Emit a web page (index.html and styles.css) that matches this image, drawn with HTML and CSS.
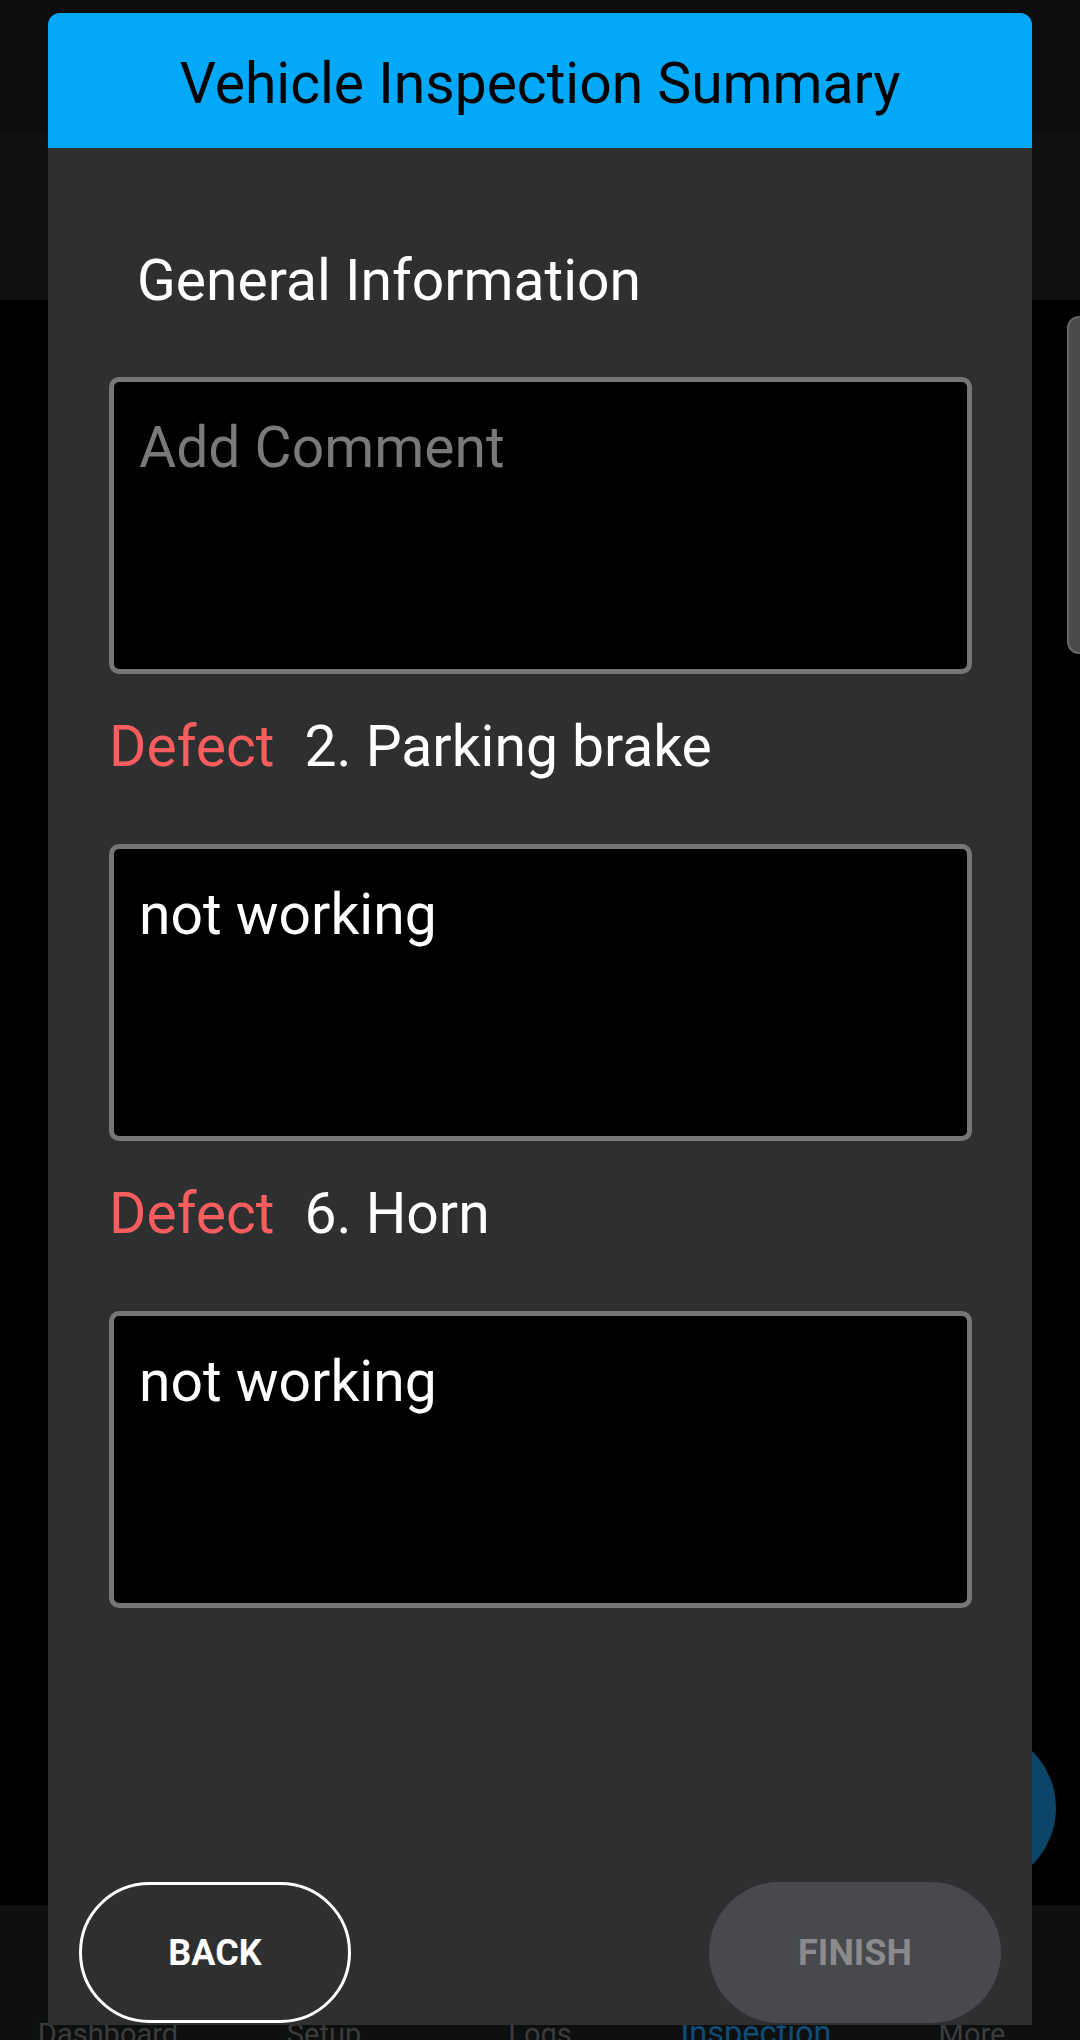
FILE: index.html
```html
<!DOCTYPE html>
<html lang="en">
<head>
<meta charset="utf-8">
<title>Vehicle Inspection Summary</title>
<link rel="stylesheet" href="styles.css">
</head>
<body>
<div class="screen">
  <div class="appbar"></div>
  <div class="subbar"></div>
  <div class="content">
    <div class="side-card"></div>
    <div class="fab"></div>
  </div>
  <nav class="navbar">
    <span class="nav-item">Dashboard</span>
    <span class="nav-item">Setup</span>
    <span class="nav-item">Logs</span>
    <span class="nav-item active">Inspection</span>
    <span class="nav-item">More</span>
  </nav>

  <div class="dialog">
    <div class="dialog-header">Vehicle Inspection Summary</div>
    <div class="dialog-body">
      <div class="section-title">General Information</div>
      <div class="comment-box"><span class="placeholder">Add Comment</span></div>

      <div class="defect-row"><span class="defect-label">Defect</span><span class="defect-name">2. Parking brake</span></div>
      <div class="comment-box"><span class="comment-text">not working</span></div>

      <div class="defect-row"><span class="defect-label">Defect</span><span class="defect-name">6. Horn</span></div>
      <div class="comment-box"><span class="comment-text">not working</span></div>
    </div>
    <div class="dialog-actions">
      <button class="btn btn-back">BACK</button>
      <button class="btn btn-finish">FINISH</button>
    </div>
  </div>
</div>
</body>
</html>
```

FILE: styles.css
```css
html, body {
  margin: 0;
  padding: 0;
  background: #000;
}

.screen {
  position: relative;
  width: 1080px;
  height: 2040px;
  overflow: hidden;
  display: flex;
  flex-direction: column;
  font-family: Roboto, "Noto Sans", sans-serif;
}

.appbar {
  height: 132px;
  background: #0c0d0d;
}

.subbar {
  height: 168px;
  background: #101112;
}

.content {
  flex: 1;
  background: #000;
  display: flex;
  flex-direction: column;
}

.side-card {
  margin-top: 16px;
  margin-left: 1067px;
  width: 60px;
  height: 338px;
  box-sizing: border-box;
  background: #4a4a4b;
  border: 2px solid #676768;
  border-radius: 12px;
}

.fab {
  margin-top: auto;
  margin-bottom: 17px;
  margin-left: 896px;
  width: 160px;
  height: 160px;
  border-radius: 50%;
  background: #0c4568;
}

.navbar {
  height: 135px;
  background: #0e0f0f;
  display: grid;
  grid-template-columns: repeat(5, 1fr);
  align-items: baseline;
  padding-top: 110px;
  box-sizing: border-box;
}

.nav-item {
  text-align: center;
  font-size: 29px;
  line-height: 36px;
  color: #3b3c3e;
}

.nav-item.active {
  font-size: 32.5px;
  color: #0f4d76;
}

.dialog {
  position: absolute;
  left: 48px;
  top: 13px;
  width: 984px;
  height: 2012px;
  background: #2e2f31;
  border-radius: 12px 12px 0 0;
  display: flex;
  flex-direction: column;
}

.dialog-header {
  height: 135px;
  box-sizing: border-box;
  padding-top: 6px;
  background: #03a9f9;
  border-radius: 12px 12px 0 0;
  display: flex;
  align-items: center;
  justify-content: center;
  font-size: 57px;
  line-height: 67px;
  color: #000;
}

.dialog-body {
  flex: 1;
  padding: 99px 60px 0 61px;
}

.section-title {
  margin-left: 28px;
  font-size: 57px;
  line-height: 67px;
  color: #fff;
}

.comment-box {
  margin-top: 63px;
  height: 297px;
  box-sizing: border-box;
  border: 5px solid #767676;
  border-radius: 10px;
  background: #000;
  padding: 32px 26px 0 25px;
  font-size: 57px;
  line-height: 67px;
}

.placeholder {
  color: #79797b;
}

.comment-text {
  color: #fff;
}

.defect-row {
  margin-top: 39px;
  display: flex;
  font-size: 57px;
  line-height: 67px;
}

.defect-row + .comment-box {
  margin-top: 64px;
}

.defect-label {
  color: #f95d5d;
}

.defect-name {
  margin-left: 30px;
  color: #fff;
}

.dialog-actions {
  display: flex;
  justify-content: space-between;
  padding: 0 31px 2px;
}

.btn {
  height: 141px;
  border-radius: 71px;
  font-family: Roboto, "Noto Sans", sans-serif;
  font-size: 36px;
  font-weight: 700;
  padding: 0;
  box-sizing: border-box;
}

.btn-back {
  width: 272px;
  background: transparent;
  border: 3px solid #fff;
  color: #fff;
}

.btn-finish {
  width: 292px;
  background: #48494c;
  border: none;
  color: #8b8b8d;
}
```
